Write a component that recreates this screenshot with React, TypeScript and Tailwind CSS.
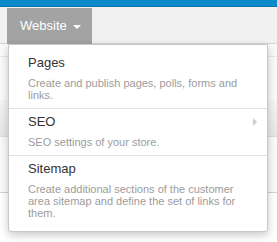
export default function App() {
  const items = [
    { title: "Pages", desc: "Create and publish pages, polls, forms and links.", arrow: false },
    { title: "SEO", desc: "SEO settings of your store.", arrow: true },
    {
      title: "Sitemap",
      desc: "Create additional sections of the customer area sitemap and define the set of links for them.",
      arrow: false,
    },
  ];
  return (
    <div className="relative w-[277px] h-[242px] overflow-hidden bg-[#fafafa] font-['Liberation_Sans',Arial,sans-serif]">
      <div className="h-[7px] bg-[#0b8bc9] border-b border-[#0a78ad]" />
      <div className="h-[37px] bg-[#f1f1f1] border-b border-[#d6d6d6] flex items-start">
        <div className="ml-[7px] mt-[1px] h-[36px] w-[85px] bg-[#a3a3a3] flex items-center pl-[13px] text-[13px] text-white">
          <span>Website</span>
          <span className="ml-[6px] mt-[1px] w-0 h-0 border-l-[4px] border-r-[4px] border-t-[4px] border-l-transparent border-r-transparent border-t-white" />
        </div>
      </div>
      <div className="h-[13px] border-b border-[#e6e6e6]" />
      <div className="h-[43px]" />
      <div className="h-[37px] bg-gradient-to-b from-[#f5f5f5] to-[#e6e6e6] border-b border-[#dcdcdc]" />
      <div className="h-[56px] border-b border-[#d2d2d2]" />
      <div className="h-[49px] bg-white" />

      <div className="absolute left-[8px] top-[44px] w-[260px] bg-white border border-[#c8c8c8] rounded-b-[3px] shadow-[0_3px_8px_rgba(0,0,0,0.22)] pt-[5px] pb-[5px]">
        {items.map((it, i) => (
          <div
            key={it.title}
            className={`relative pl-[19px] pr-[14px] pt-[4px] pb-[7px] ${i > 0 ? "border-t border-[#e2e2e2]" : ""}`}
          >
            <div className="text-[13px] leading-[18px] text-[#333333]">{it.title}</div>
            <div className="mt-[5px] text-[11px] leading-[12px] text-[#9c9c9c]">{it.desc}</div>
            {it.arrow && (
              <span className="absolute right-[10px] top-[9px] w-0 h-0 border-t-[4px] border-b-[4px] border-l-[4px] border-t-transparent border-b-transparent border-l-[#cccccc]" />
            )}
          </div>
        ))}
      </div>
    </div>
  );
}
